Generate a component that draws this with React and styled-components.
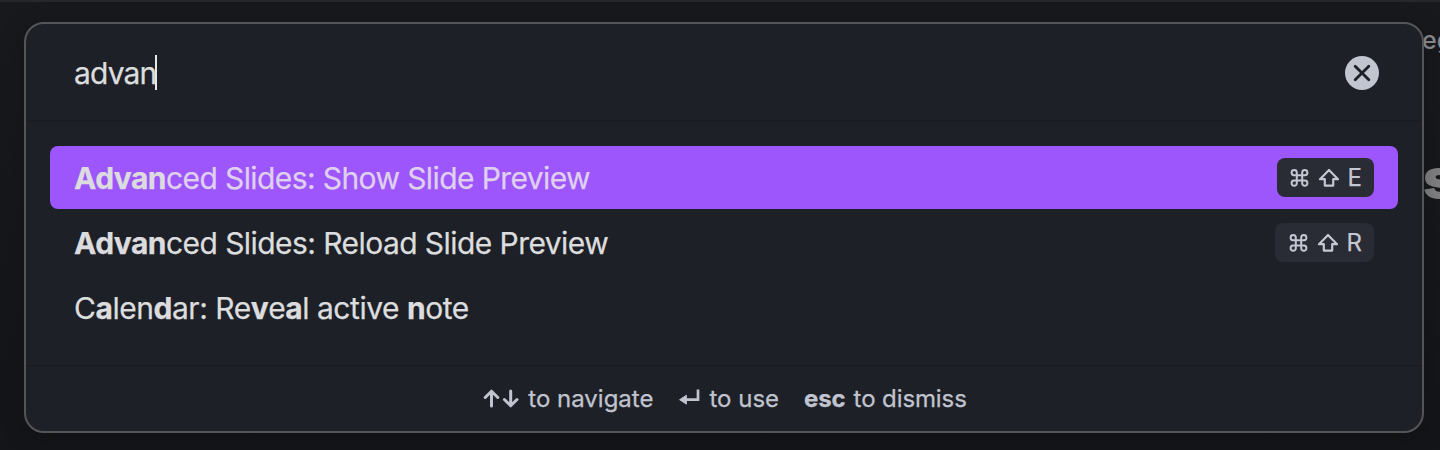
import React from "react";
import styled, { createGlobalStyle } from "styled-components";

const GlobalStyle = createGlobalStyle`
  *, *::before, *::after { box-sizing: border-box; }
  body {
    margin: 0;
    background: #151619;
    font-family: Inter, "Liberation Sans", sans-serif;
    color: #dcddde;
    overflow: hidden;
  }
`;

const Screen = styled.main`
  position: relative;
  height: 450px;
  padding: 20px 16px 17px 24px;
  border-top: 2px solid #25272b;
  background: linear-gradient(#17191c, #141518);
  overflow: hidden;
`;

const PageText = styled.span`
  position: absolute;
  left: ${(p) => p.$left}px;
  top: ${(p) => p.$top}px;
  font-size: ${(p) => p.$size}px;
  font-weight: ${(p) => p.$weight};
  line-height: 1;
  white-space: nowrap;
  color: ${(p) => p.$color};
`;

const Prompt = styled.section`
  position: relative;
  display: flex;
  flex-direction: column;
  height: 411px;
  border: 2px solid #555557;
  border-radius: 20px;
  background: #1e2027;
  box-shadow: 0 4px 24px rgba(0, 0, 0, 0.22);
  -webkit-text-stroke: 0.25px currentColor;
`;

const SearchBar = styled.header`
  display: flex;
  align-items: center;
  justify-content: space-between;
  height: 98px;
  padding: 2px 43px 0 48px;
  border-bottom: 2px solid #1a1c21;
`;

const Query = styled.div`
  display: flex;
  align-items: center;
  font-size: 30px;
  line-height: 36px;
  letter-spacing: -0.85px;
`;

const Caret = styled.span`
  width: 2px;
  height: 35px;
  margin: -2px 0 0 -1px;
  background: #e6e7e9;
`;

const ClearButton = styled.button`
  display: flex;
  padding: 0;
  border: 0;
  background: none;
`;

const Results = styled.ul`
  display: flex;
  flex-direction: column;
  gap: 2px;
  flex: 1;
  margin: 0;
  padding: 24px;
  list-style: none;
`;

const Row = styled.li`
  display: flex;
  align-items: center;
  justify-content: space-between;
  height: 63px;
  padding: 0 24px;
  border-radius: 8px;
  background: ${(p) => (p.$active ? "#9d55fc" : "transparent")};
`;

const Label = styled.span`
  font-size: 30px;
  line-height: 36px;
  letter-spacing: ${(p) => p.$tracking}px;
  white-space: pre;
  color: ${(p) => (p.$active ? "#dfd0ee" : "#dcddde")};
`;

const Match = styled.b`
  font-weight: 700;
  letter-spacing: ${(p) => p.$tracking}px;
  color: #dcdcde;
`;

const Hotkey = styled.kbd`
  display: flex;
  align-items: center;
  gap: 9px;
  height: 39px;
  padding: 0 12px 0 ${(p) => p.$inset}px;
  border-radius: 8px;
  background: #292b35;
  font-family: inherit;
  font-size: 24px;
  line-height: 28px;
  color: #c3c7d2;
`;

const Footer = styled.footer`
  display: flex;
  align-items: center;
  justify-content: center;
  gap: 25px;
  height: 66px;
  padding-left: 2px;
  border-top: 2px solid #1a1c21;
  font-size: 24px;
  line-height: 28px;
  color: #c0c4cf;
`;

const Hint = styled.span`
  display: flex;
  align-items: center;
  gap: 8px;
  letter-spacing: ${(p) => p.$tracking}px;
  b { font-weight: 700; }
`;

const Line = styled.svg`
  display: block;
  flex: none;
  fill: none;
  stroke: currentColor;
`;

const ClearIcon = () => (
  <Line width="34" height="34" viewBox="0 0 34 34">
    <circle cx="17" cy="17" r="17" fill="#c0c5d0" stroke="none" />
    <path d="M10.2 10.2l13.6 13.6M23.8 10.2L10.2 23.8" stroke="#1e2027" strokeWidth="2.8" strokeLinecap="round" />
  </Line>
);

const CommandIcon = () => (
  <Line width="20" height="20" viewBox="0 0 20 20" strokeWidth="2">
    <path d="M7.8 7.2h5.4v5.3H7.8zM7.8 7.2H5A2.6 2.6 0 1 1 7.8 4.5zM13.2 7.2V4.5A2.6 2.6 0 1 1 16 7.2zM13.2 12.5H16a2.6 2.6 0 1 1-2.8 2.7zM7.8 12.5v2.7A2.6 2.6 0 1 1 5 12.5z" />
  </Line>
);

const ShiftIcon = () => (
  <Line width="21" height="20" viewBox="0 0 21 20" strokeWidth="2.2" strokeLinejoin="round">
    <path d="M11 2L2 11.2H6.8V17.6H15.2V11.2H20Z" />
  </Line>
);

const ArrowsIcon = () => (
  <Line width="37" height="20" viewBox="0 0 37 20" strokeWidth="3" strokeLinecap="round" strokeLinejoin="round">
    <path d="M8.5 17V2.8M2.2 8.5L8.5 2.2L14.8 8.5M27.7 2V16.2M21.4 10.5L27.7 16.8L34 10.5" />
  </Line>
);

const ReturnIcon = () => (
  <Line width="23" height="20" viewBox="0 0 23 20" strokeWidth="2.7">
    <path d="M20 0.5V10.7H6" />
    <path d="M8.4 6.3V15.1L1.6 10.7Z" fill="currentColor" strokeWidth="1" strokeLinejoin="round" />
  </Line>
);

const Shortcut = ({ letter, inset = 12 }) => (
  <Hotkey $inset={inset}>
    <CommandIcon />
    <ShiftIcon />
    <span>{letter}</span>
  </Hotkey>
);

export default function App() {
  return (
    <>
      <GlobalStyle />
      <Screen>
        <PageText $left={1422} $top={26} $size={25} $weight={500} $color="#8a8b8e">eg</PageText>
        <PageText $left={1423} $top={150} $size={54} $weight={900} $color="#808082">s</PageText>
        <Prompt>
          <SearchBar>
            <Query>advan<Caret /></Query>
            <ClearButton aria-label="Clear"><ClearIcon /></ClearButton>
          </SearchBar>
          <Results>
            <Row $active>
              <Label $active $tracking={-0.6}><Match $tracking={-0.55}>Advan</Match>ced Slides: Show Slide Preview</Label>
              <Shortcut letter="E" />
            </Row>
            <Row>
              <Label $tracking={-0.56}><Match $tracking={-0.55}>Advan</Match>ced Slides: Reload Slide Preview</Label>
              <Shortcut letter="R" inset={13} />
            </Row>
            <Row>
              <Label $tracking={-0.46}>
                C<Match $tracking={-0.5}>a</Match>len<Match $tracking={-0.5}>d</Match>ar: Re<Match $tracking={-0.5}>v</Match>e<Match $tracking={-0.5}>a</Match>l active <Match $tracking={-0.5}>n</Match>ote
              </Label>
            </Row>
          </Results>
          <Footer>
            <Hint $tracking={0}><ArrowsIcon />to navigate</Hint>
            <Hint $tracking={0}><ReturnIcon />to use</Hint>
            <Hint $tracking={-0.1}><b>esc</b>to dismiss</Hint>
          </Footer>
        </Prompt>
      </Screen>
    </>
  );
}
